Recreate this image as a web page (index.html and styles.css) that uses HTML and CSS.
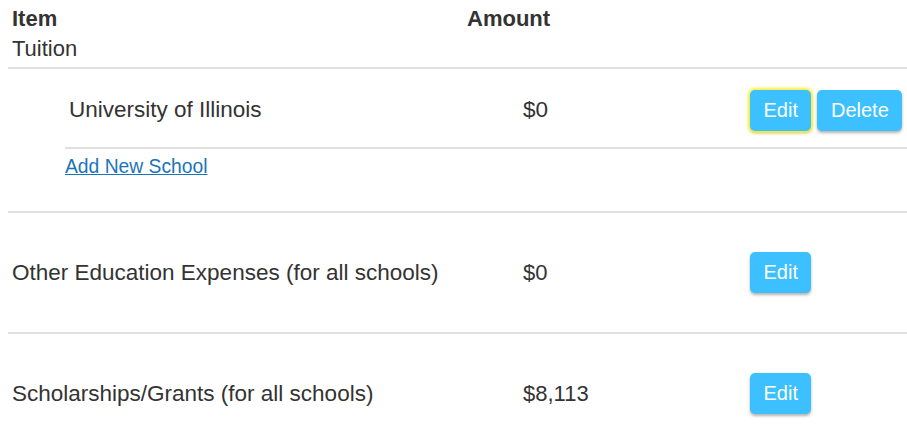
FILE: index.html
```html
<!DOCTYPE html>
<html>
<head>
<meta charset="utf-8">
<link rel="stylesheet" href="styles.css">
</head>
<body>
<div class="page">
  <div class="head">
    <div class="head-row">
      <div class="col-item"><b>Item</b></div>
      <div class="col-amount"><b>Amount</b></div>
    </div>
    <div class="group-title">Tuition</div>
  </div>
  <div class="section tuition">
    <div class="school-row">
      <div class="school-name">University of Illinois</div>
      <div class="amount">$0</div>
      <div class="actions">
        <button class="btn focused">Edit</button>
        <button class="btn">Delete</button>
      </div>
    </div>
    <div class="add-row"><a href="#" class="link">Add New School</a></div>
  </div>
  <div class="section row">
    <div class="name">Other Education Expenses (for all schools)</div>
    <div class="amount">$0</div>
    <div class="actions"><button class="btn">Edit</button></div>
  </div>
  <div class="section row">
    <div class="name">Scholarships/Grants (for all schools)</div>
    <div class="amount">$8,113</div>
    <div class="actions"><button class="btn">Edit</button></div>
  </div>
</div>
</body>
</html>
```
FILE: styles.css
```css
* { box-sizing: border-box; }
html, body { margin: 0; padding: 0; background: #fff; }
body {
  font-family: "Liberation Sans", Arial, sans-serif;
  font-size: 22px;
  color: #333;
  overflow: hidden;
}
.page { margin-left: 8px; }
.head { padding: 6px 0 1px 4px; border-bottom: 2px solid #e0e0e0; }
.head-row { display: flex; height: 26px; align-items: center; }
.col-item { width: 455px; }
.group-title { line-height: 34px; }
.school-row {
  display: grid;
  grid-template-columns: 454px 227px 1fr;
  align-items: center;
  margin-left: 57px;
  height: 80px;
  padding-top: 4px;
  border-bottom: 2px solid #e0e0e0;
  padding-left: 4px;
  font-size: 22.5px;
}
.row .name { font-size: 22.5px; }
.actions { display: flex; gap: 6px; }
.btn {
  font-family: "Liberation Sans", Arial, sans-serif;
  font-size: 20px;
  color: #fff;
  background: #3cc0ff;
  border: none;
  border-radius: 5px;
  height: 41px;
  padding: 0 13.5px;
  box-shadow: 0 2px 3px rgba(0,0,0,0.3);
}
.btn.focused { box-shadow: 0 0 3px 2px #f5ee3a, 0 2px 3px rgba(0,0,0,0.3); }
.add-row { margin-left: 57px; height: 62px; padding-top: 5px; line-height: 25px; font-size: 19.3px; }
.link { color: #1a75b8; text-decoration: underline; }
.tuition { border-bottom: 2px solid #e0e0e0; }
.row {
  display: grid;
  grid-template-columns: 511px 227px 1fr;
  align-items: center;
  height: 121px;
  padding-left: 4px;
  border-bottom: 2px solid #e0e0e0;
}
```
